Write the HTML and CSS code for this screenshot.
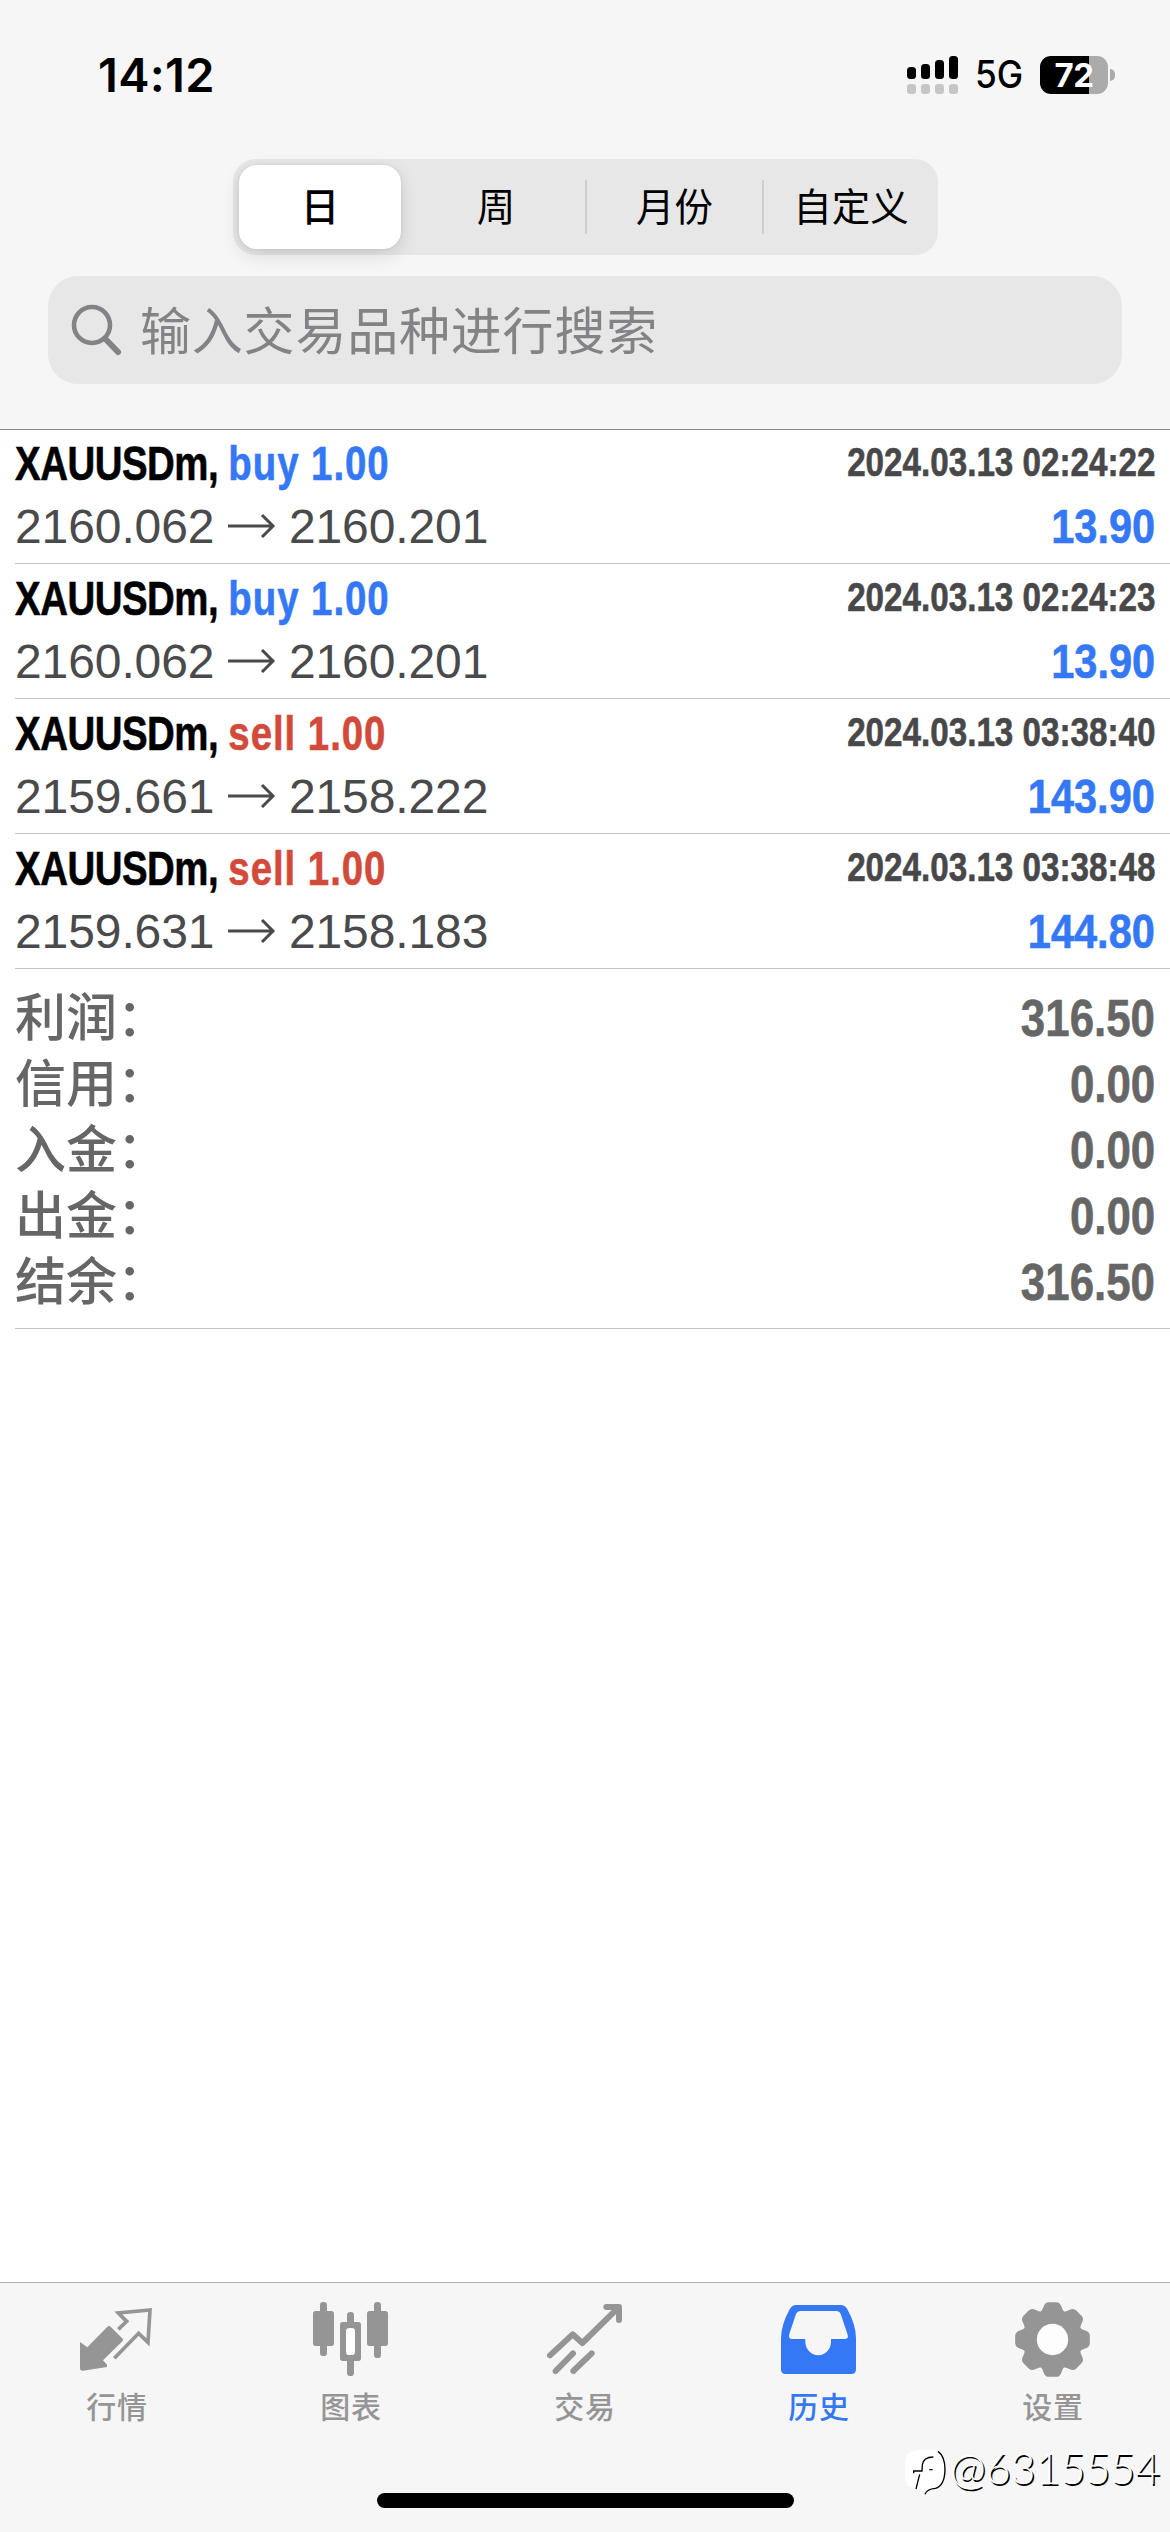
FILE: index.html
```html
<!DOCTYPE html>
<html lang="zh-CN">
<head>
<meta charset="utf-8">
<title>历史</title>
<link rel="stylesheet" href="styles.css">
</head>
<body>
<div class="screen">
  <header class="top">
    <div class="status">
      <span class="time">14:12</span>
      <div class="status-right">
        <svg class="signal" viewBox="0 0 51 38" width="51" height="38">
          <g fill="#000"><rect y="11" width="9" height="12" rx="3.5"/><rect x="14" y="8" width="9" height="15" rx="3.5"/><rect x="28" y="4" width="9" height="19" rx="3.5"/><rect x="42" width="9" height="23" rx="3.5"/></g>
          <g fill="#c6c6c6"><rect y="28" width="9" height="10" rx="3"/><rect x="14" y="28" width="9" height="10" rx="3"/><rect x="28" y="28" width="9" height="10" rx="3"/><rect x="42" y="28" width="9" height="10" rx="3"/></g>
        </svg>
        <span class="net">5G</span>
        <div class="battery"><span class="level">72</span></div>
        <span class="tip"></span>
      </div>
    </div>
    <nav class="segments">
      <span class="seg active">日</span>
      <span class="seg">周</span>
      <span class="seg ruled">月份</span>
      <span class="seg ruled">自定义</span>
    </nav>
    <div class="search">
      <svg viewBox="0 0 52 54" width="52" height="54" fill="none" stroke="#838385" stroke-linecap="round"><circle cx="21" cy="22" r="18" stroke-width="4.600"/><path d="M34.5 36 L47 49" stroke-width="6"/></svg>
      <span class="hint">输入交易品种进行搜索</span>
    </div>
  </header>

  <main class="content">
    <section class="deal first">
      <div class="line"><span class="name">XAUUSDm, <b class="buy">buy 1.00</b></span><span class="date">2024.03.13 02:24:22</span></div>
      <div class="line"><span class="price">2160.062 <i class="arrow"><svg viewBox="0 0 48 26" width="48" height="26"><path d="M0 13H44M34 2L45 13L34 24"/></svg></i> 2160.201</span><span class="profit">13.90</span></div>
    </section>
    <section class="deal">
      <div class="line"><span class="name">XAUUSDm, <b class="buy">buy 1.00</b></span><span class="date">2024.03.13 02:24:23</span></div>
      <div class="line"><span class="price">2160.062 <i class="arrow"><svg viewBox="0 0 48 26" width="48" height="26"><path d="M0 13H44M34 2L45 13L34 24"/></svg></i> 2160.201</span><span class="profit">13.90</span></div>
    </section>
    <section class="deal">
      <div class="line"><span class="name">XAUUSDm, <b class="sell">sell 1.00</b></span><span class="date">2024.03.13 03:38:40</span></div>
      <div class="line"><span class="price">2159.661 <i class="arrow"><svg viewBox="0 0 48 26" width="48" height="26"><path d="M0 13H44M34 2L45 13L34 24"/></svg></i> 2158.222</span><span class="profit">143.90</span></div>
    </section>
    <section class="deal">
      <div class="line"><span class="name">XAUUSDm, <b class="sell">sell 1.00</b></span><span class="date">2024.03.13 03:38:48</span></div>
      <div class="line"><span class="price">2159.631 <i class="arrow"><svg viewBox="0 0 48 26" width="48" height="26"><path d="M0 13H44M34 2L45 13L34 24"/></svg></i> 2158.183</span><span class="profit">144.80</span></div>
    </section>
    <section class="totals">
      <div class="total"><span>利润：</span><span class="sum">316.50</span></div>
      <div class="total"><span>信用：</span><span class="sum">0.00</span></div>
      <div class="total"><span>入金：</span><span class="sum">0.00</span></div>
      <div class="total"><span>出金：</span><span class="sum">0.00</span></div>
      <div class="total"><span>结余：</span><span class="sum">316.50</span></div>
    </section>
  </main>

  <footer class="bottom">
    <nav class="tabs">
      <div class="tab">
        <svg viewBox="231 90 240 240" width="80" height="80">
          <path fill="#959595" d="M240 216 L262 232 L322 170 Q327 166 332 170 L368 206 Q371 210 367 214 L309 271 L321 284 V291 L249 302 Q240 303 240 294Z"/>
          <path fill="none" stroke="#959595" stroke-width="11" d="M355 178 L380 154 L355 129 L450 120 L444 217 L416 190 L343 265"/>
        </svg>
        <span>行情</span>
      </div>
      <div class="tab">
        <svg viewBox="933 90 240 240" width="80" height="80" fill="#959595">
          <rect x="960" y="96" width="21" height="162" rx="10"/><rect x="939" y="123" width="63" height="105" rx="8"/>
          <rect x="1122" y="96" width="21" height="168" rx="10"/><rect x="1101" y="123" width="63" height="105" rx="8"/>
          <rect x="1041" y="126" width="21" height="192" rx="10"/><rect x="1020" y="156" width="63" height="117" rx="8"/><rect x="1038" y="174" width="27" height="81" rx="10" fill="#fff"/>
        </svg>
        <span>图表</span>
      </div>
      <div class="tab">
        <svg viewBox="435 90 240 240" width="80" height="80" fill="none" stroke="#959595" stroke-width="18" stroke-linecap="round" stroke-linejoin="round">
          <path d="M450 256 L518 193 L547 219 L652 116"/><path d="M619 111 H657 V150"/><path d="M467 303 L519 250 M520 303 L575 250"/>
        </svg>
        <span>交易</span>
      </div>
      <div class="tab current">
        <svg viewBox="27 90 240 240" width="80" height="80">
          <path fill="#3478f6" fill-rule="evenodd" d="M79 105 H211 Q226 105 232 118 Q258 165 258 205 V298 Q258 312 244 312 H47 Q33 312 33 298 V205 Q33 165 59 118 Q66 105 79 105Z M92 123 Q82 123 78 132 L58 192 Q54 207 66 207 H106 V215 A38 40 0 0 0 183 215 V207 H223 Q237 207 233 194 L212 132 Q209 123 199 123Z"/>
        </svg>
        <span>历史</span>
      </div>
      <div class="tab">
        <svg viewBox="729 90 240 240" width="80" height="80">
          <g fill="#959595" transform="translate(847.5 208.500)">
            <circle r="85"/>
            <path id="tooth" d="M-42 -78 Q-32 -82 -27 -98 Q-23 -112 -11 -112 H11 Q23 -112 27 -98 Q32 -82 42 -78Z"/>
            <use href="#tooth" transform="rotate(45)"/><use href="#tooth" transform="rotate(90)"/><use href="#tooth" transform="rotate(135)"/><use href="#tooth" transform="rotate(180)"/><use href="#tooth" transform="rotate(225)"/><use href="#tooth" transform="rotate(270)"/><use href="#tooth" transform="rotate(315)"/>
            <circle r="47" fill="#fdfdfd"/>
          </g>
        </svg>
        <span>设置</span>
      </div>
    </nav>
    <div class="home"></div>
    <div class="watermark">
      <svg viewBox="0 0 132 144" width="44" height="48">
        <path fill="#fff" d="M38 3 H90 Q122 12 122 50 Q122 100 96 116 Q70 118 66 136 L58 120 H34 Q3 114 3 82 V40 Q5 6 38 3Z"/>
        <g fill="none" stroke="#000" stroke-width="4"><path d="M102 7 Q123 22 123 62 Q122 110 94 118 Q68 120 63 136"/><path d="M88 24 Q58 24 55 48 L54 66 H29 V73 M47 76 L36 120 M76 62 H86"/></g>
      </svg>
      <span>@6315554</span>
    </div>
  </footer>
</div>
</body>
</html>
```
FILE: styles.css
```css
* { box-sizing: border-box; }
body { margin: 0; background: #fff; }
.screen {
  width: 1170px; height: 2532px; display: flex; flex-direction: column; overflow: hidden;
  font-family: "Liberation Sans", "Noto Sans CJK SC", sans-serif; background: #fff;
}
.top { height: 430px; background: #f6f6f6; border-bottom: 1px solid #8c8c8c; }

.status { height: 159px; padding: 46px 55px 0 98px; display: flex; justify-content: space-between; font-family: Inter, sans-serif; }
.time { font-size: 47px; line-height: 58px; font-weight: 600; letter-spacing: .3px; white-space: nowrap; }
.status-right { display: flex; height: 58px; align-items: center; }
.signal { margin-right: 17px; }
.net { width: 48px; margin-right: 17px; font-size: 37.5px; line-height: 60px; font-weight: 500; transform: scaleX(.94); transform-origin: left; }
.battery {
  width: 68px; height: 38px; border-radius: 11px; display: flex; align-items: center; justify-content: center;
  background: linear-gradient(90deg, #000 49px, #ababab 49px);
}
.level { color: #fff; font-size: 33px; line-height: 38px; font-weight: 700; letter-spacing: -.5px; }
.tip { width: 5px; height: 12px; margin-left: 2px; border-radius: 0 6px 6px 0; background: #ababab; }

.segments {
  width: 705px; height: 96px; margin-left: 233px; border-radius: 23px; background: #e7e7e8; padding: 6px 0;
  display: grid; grid-template-columns: 174px 178px 177px 176px; align-items: center;
  font-size: 38.5px; line-height: 56px; font-weight: 400;
}
.seg { height: 54px; text-align: center; }
.seg.active { height: 84px; line-height: 86px; margin: 0 6px; border-radius: 18px; background: #fff; font-weight: 500; box-shadow: 0 6px 18px rgba(0,0,0,.12), 0 0 4px rgba(0,0,0,.08); }
.seg.ruled { border-left: 2px solid #cfcfd0; }

.search {
  height: 108px; margin: 21px 48px 0; padding: 0 23px; border-radius: 30px; background: #e7e7e8;
  display: flex; align-items: center; color: #838385;
}
.hint { margin-left: 17px; padding-top: 6px; font-size: 51px; line-height: 102px; letter-spacing: .8px; }

.content { flex: 1; padding-left: 15px; }
.deal { height: 135px; padding: 3px 15px 0 0; border-bottom: 1px solid #c4c4c6; }
.deal.first { height: 134px; padding-top: 2px; }
.line { display: flex; justify-content: space-between; height: 63px; white-space: nowrap; }

/* condensed bold lettering */
.name, .date, .profit, .sum { font-weight: 700; -webkit-text-stroke: .6px currentColor; transform-origin: right; }
.name { font-size: 48px; line-height: 63px; color: #000; letter-spacing: -.6px; transform: scaleX(.8); transform-origin: left; }
.name b { letter-spacing: 1.2px; }
.buy { color: #3478f6; }
.sell { color: #d24a3a; }
.date { font-size: 40px; line-height: 61px; color: #48484a; transform: scaleX(.83); }
.profit { font-size: 48px; line-height: 63px; color: #3478f6; transform: scaleX(.865); }

.price { font-size: 48px; line-height: 63px; color: #4a4a4c; letter-spacing: -.1px; }
.arrow { display: inline-block; width: 48px; height: 26px; line-height: 0; vertical-align: 4px; }
.arrow svg { fill: none; stroke: #4a4a4c; stroke-width: 3; }

.totals { height: 360px; padding: 17px 15px 0 0; border-bottom: 1px solid #c4c4c6; color: #666; }
.total { height: 66px; display: flex; justify-content: space-between; font-size: 51px; line-height: 66px; font-weight: 500; }
.sum { font-size: 51px; line-height: 65px; transform: scaleX(.86); }

.bottom { height: 250px; border-top: 1px solid #b0b0b0; background: #f6f6f6; position: relative; }
.tabs { height: 210px; padding-top: 17px; display: grid; grid-template-columns: repeat(5, 234px); color: #959595; }
.tab { display: flex; flex-direction: column; align-items: center; font-size: 30px; line-height: 44px; font-weight: 500; letter-spacing: .8px; gap: 6px; }
.current { color: #3478f6; }
.home { width: 417px; height: 15px; margin-left: 377px; border-radius: 8px; background: #000; }
.watermark { position: absolute; left: 904px; top: 161px; display: flex; align-items: center; color: #fff; font: 300 43px/48px Lato, sans-serif; text-shadow: 1.5px 1.5px .5px #000; }
.watermark span { margin: 0 0 10px 2px; }
```
